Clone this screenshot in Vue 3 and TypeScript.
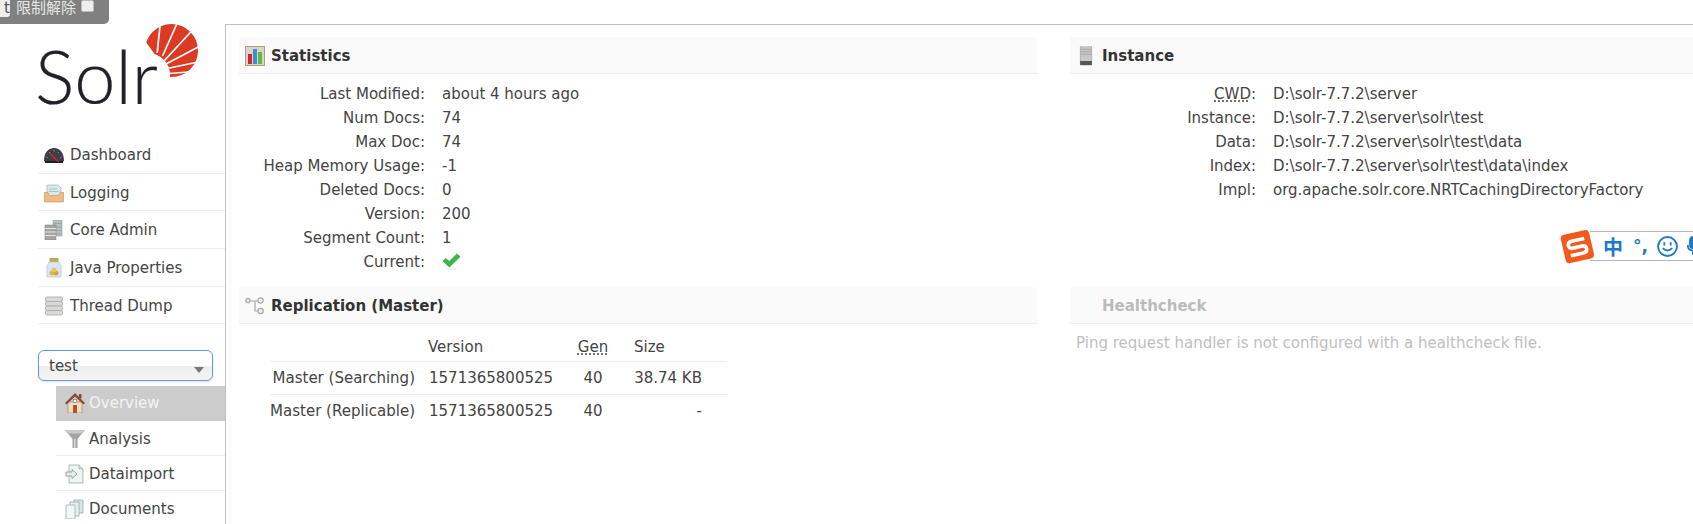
<script setup lang="ts">
const stats: [string, string][] = [
  ['Last Modified:', 'about 4 hours ago'],
  ['Num Docs:', '74'],
  ['Max Doc:', '74'],
  ['Heap Memory Usage:', '-1'],
  ['Deleted Docs:', '0'],
  ['Version:', '200'],
  ['Segment Count:', '1'],
]
const inst: [string, string][] = [
  ['Instance:', 'D:\\solr-7.7.2\\server\\solr\\test'],
  ['Data:', 'D:\\solr-7.7.2\\server\\solr\\test\\data'],
  ['Index:', 'D:\\solr-7.7.2\\server\\solr\\test\\data\\index'],
  ['Impl:', 'org.apache.solr.core.NRTCachingDirectoryFactory'],
]
const rays: [number, number, number, number][] = [
  [157.2, 53, 160.6, 20],
  [162.5, 56, 179, 19],
  [164.5, 60.5, 193, 29.5],
  [166, 64, 202, 45],
  [167, 68.5, 203, 61],
  [169, 73.5, 195, 71.5],
]
</script>

<template>
  <div class="page">
    <div class="banner">
      <span class="chip">t</span>
      <span class="banner-text">限制解除</span>
      <span class="check"></span>
    </div>

    <aside class="side">
      <div class="logo">
        <span class="logo-text">Solr</span>
        <svg class="sun" width="225" height="100" viewBox="0 0 225 100">
          <defs>
            <mask id="sunmask">
              <rect width="225" height="100" fill="#fff" />
              <circle cx="148" cy="75" r="22" fill="#000" />
              <polygon points="143,41.500 145.500,41.500 156,56 143,62" fill="#000" />
            </mask>
          </defs>
          <g mask="url(#sunmask)">
            <circle cx="171.500" cy="50.500" r="26.500" fill="#dc3a23" />
            <line v-for="(r, i) in rays" :key="i" :x1="r[0]" :y1="r[1]" :x2="r[2]" :y2="r[3]" stroke="#fff" stroke-width="1.700" />
          </g>
        </svg>
      </div>

      <ul class="nav">
        <li>
          <svg class="ico" viewBox="0 0 20 20"><path d="M0 16C0 8 4 3 10 3s10 5 10 13l-3 2H3z" fill="#3c3f44" /><path d="M1 16h18v2H1z" fill="#1e1f22" /><path d="M2.500 12L4 13M5 7l1 1M10 5v1.500M15 7l-1 1M17.500 12L16 13" stroke="#9a9da3" stroke-width=".8" /><path d="M6 8l8.500 9" stroke="#d8232a" stroke-width="1.300" /></svg>
          Dashboard
        </li>
        <li>
          <svg class="ico" viewBox="0 0 20 20"><path d="M3 2h11l3 3v9H3z" fill="#d6ebec" stroke="#9fb6b8" stroke-width=".7" /><path d="M5 6h8M5 8.500h10" stroke="#9fb6b8" stroke-width=".8" /><path d="M0 9.500h4l1 3h10l1-3h4v8a1.500 1.500 0 0 1-1.500 1.500h-17A1.500 1.500 0 0 1 0 17.500z" fill="#eebd85" stroke="#c98f50" stroke-width=".6" /></svg>
          Logging
        </li>
        <li>
          <svg class="ico" viewBox="0 0 20 20"><rect x="9" y="0" width="9" height="16" fill="#b9bdc4" stroke="#8d9199" stroke-width=".5" /><path d="M9 3.500h9M9 7h9M9 10.500h9M9 14h9" stroke="#84a98d" stroke-width=".8" /><path d="M1 5h11v15H1z" fill="#a5a7a5" stroke="#777" stroke-width=".5" /><path d="M1 8.500h11M1 12h11M1 15.500h11" stroke="#e3e3e3" /></svg>
          Core Admin
        </li>
        <li>
          <svg class="ico" viewBox="0 0 20 20"><rect x="5.500" y="0" width="9" height="4" fill="#c9a35a" /><path d="M5 4h10l2 4v11H3V8z" fill="#d9e8f2" stroke="#a9bfcf" stroke-width=".6" /><circle cx="8" cy="15" r="2.500" fill="#e3b34f" /><circle cx="12" cy="15" r="2.500" fill="#d9a23f" /><circle cx="10" cy="12" r="2.500" fill="#ecc36b" /></svg>
          Java Properties
        </li>
        <li>
          <svg class="ico" viewBox="0 0 20 20"><g fill="#d9d9d7" stroke="#a8a8a6" stroke-width=".8"><rect x="1.500" y="1" width="17" height="4.500" rx="1.500" /><rect x="1.500" y="5.500" width="17" height="4.500" rx="1.500" /><rect x="1.500" y="10" width="17" height="4.500" rx="1.500" /><rect x="1.500" y="14.500" width="17" height="4.500" rx="1.500" /></g></svg>
          Thread Dump
        </li>
      </ul>

      <div class="select">
        <span>test</span>
        <i class="arrow"></i>
      </div>

      <ul class="subnav">
        <li class="active">
          <svg class="ico" viewBox="0 0 20 20"><path d="M3 9h14v11H3z" fill="#f1dcc0" stroke="#a07c58" stroke-width=".6" /><path d="M0 10L10 0l10 10-1.500 1.500L10 3.500 1.500 11.500z" fill="#8a4a36" /><rect x="14" y="1" width="2.500" height="4.500" fill="#8a4a36" /><rect x="8" y="12" width="4" height="8" fill="#b3552a" /><rect x="8.500" y="6.500" width="3" height="3" fill="#fff" stroke="#8a4a36" stroke-width=".5" /></svg>
          Overview
        </li>
        <li>
          <svg class="ico" viewBox="0 0 20 20"><path d="M0 1h20l-7.500 9v9h-5v-9z" fill="#a3a5a3" /><path d="M0 1h20l-3 3.500H3z" fill="#c9cac9" /><path d="M9 10h1.500v9H9z" fill="#d6d6d6" /></svg>
          Analysis
        </li>
        <li>
          <svg class="ico" viewBox="0 0 20 20"><path d="M4 1h10l4 4v14H4z" fill="#eef4f2" stroke="#9aaba8" stroke-width=".8" /><path d="M14 1v4h4" fill="#cfdcd9" stroke="#9aaba8" stroke-width=".6" /><path d="M1 8h6V5.500l5 4.500-5 4.500V12H1z" fill="#e6efec" stroke="#87a09c" stroke-width=".9" /></svg>
          Dataimport
        </li>
        <li>
          <svg class="ico" viewBox="0 0 20 20"><path d="M9 1h9v13H9z" fill="#d9e4e4" stroke="#8fa3a3" stroke-width=".7" /><path d="M5 3h9v14H5z" fill="#e6eeee" stroke="#8fa3a3" stroke-width=".7" /><path d="M1 6h9v14H1z" fill="#f2f6f6" stroke="#8fa3a3" stroke-width=".7" /></svg>
          Documents
        </li>
      </ul>
    </aside>

    <main class="main">
      <section class="block">
        <h2>
          <svg class="h-ico" viewBox="0 0 20 20"><rect x=".5" y=".5" width="19" height="19" fill="#dcd4c4" stroke="#a89f8c" /><rect x="3" y="8" width="4" height="10" fill="#d8232a" /><rect x="8" y="3" width="4" height="15" fill="#3a8fd8" /><rect x="13" y="6" width="4" height="12" fill="#5cb848" /></svg>
          Statistics
        </h2>
        <dl class="rows">
          <div v-for="s in stats" :key="s[0]" class="row">
            <dt>{{ s[0] }}</dt>
            <dd>{{ s[1] }}</dd>
          </div>
          <div class="row">
            <dt>Current:</dt>
            <dd>
              <svg class="tick" width="19" height="17" viewBox="0 0 19 17"><path d="M3 16h11" stroke="#e2e2e2" /><path d="M0.500 8l3.200-3 3.500 3L15 .5l3.500 3.200L7.300 14.500z" fill="#3fb44a" /></svg>
            </dd>
          </div>
        </dl>
      </section>

      <section class="block">
        <h2>
          <svg class="h-ico" viewBox="0 0 20 24"><rect x="3" y="1" width="14" height="21" fill="#c9c9c9" stroke="#8e8e8e" stroke-width=".6" /><path d="M4 4h12M4 7h12M4 10h12" stroke="#a0a0a0" /><rect x="3" y="18" width="14" height="5" fill="#555" /></svg>
          Instance
        </h2>
        <dl class="rows">
          <div class="row">
            <dt><abbr>CWD</abbr>:</dt>
            <dd>D:\solr-7.7.2\server</dd>
          </div>
          <div v-for="s in inst" :key="s[0]" class="row">
            <dt>{{ s[0] }}</dt>
            <dd>{{ s[1] }}</dd>
          </div>
        </dl>
      </section>

      <section class="block">
        <h2>
          <svg class="h-ico" viewBox="0 0 20 20"><g fill="#eee" stroke="#a8a8a8" stroke-width="1.200"><path d="M4 5h9M10 5v10h4" fill="none" /><circle cx="3" cy="4.500" r="2.200" /><circle cx="15.500" cy="4.500" r="2.700" /><circle cx="15.500" cy="15" r="2.700" /></g></svg>
          Replication (Master)
        </h2>
        <table class="rep">
          <thead>
            <tr>
              <th></th>
              <th>Version</th>
              <th class="gen"><abbr>Gen</abbr></th>
              <th>Size</th>
            </tr>
          </thead>
          <tbody>
            <tr>
              <td class="name">Master (Searching)</td>
              <td>1571365800525</td>
              <td class="gen">40</td>
              <td class="size">38.74 KB</td>
            </tr>
            <tr>
              <td class="name">Master (Replicable)</td>
              <td>1571365800525</td>
              <td class="gen">40</td>
              <td class="size">-</td>
            </tr>
          </tbody>
        </table>
      </section>

      <section class="block">
        <h2 class="off">Healthcheck</h2>
        <p class="ping">Ping request handler is not configured with a healthcheck file.</p>
      </section>
    </main>

    <div class="ime">
      <svg class="ime-s" width="36" height="36" viewBox="0 0 36 36">
        <rect x="3" y="3" width="29" height="29" rx="4" fill="#f2591a" transform="rotate(-13 18 18)" />
        <path d="M26 11H13q-4 0-4 3.500t4 3.500h9q4 0 4 3.500T22 25H9" fill="none" stroke="#fff" stroke-width="3.600" transform="rotate(-13 18 18)" />
      </svg>
      <span class="ime-zh">中</span>
      <span class="ime-p">°,</span>
      <svg class="ime-face" width="21" height="21" viewBox="0 0 20 20" fill="none" stroke="#1f78c8" stroke-width="1.800"><circle cx="10" cy="10" r="9" /><path d="M5.500 11.500q4.500 4.500 9 0" /><path d="M7 6v3M13 6v3" /></svg>
      <svg class="ime-mic" width="12" height="20" viewBox="0 0 12 20" fill="none" stroke="#1f78c8" stroke-width="1.800"><rect x="3" y="1" width="6" height="11" rx="3" fill="#1f78c8" /><path d="M0.800 9q0 5.500 5.200 5.500T11.200 9M6 14.500V19" /></svg>
    </div>
  </div>
</template>

<style>
html, body { margin: 0; overflow: hidden; background: #fff; }
</style>

<style scoped>
.page {
  position: relative;
  display: flex;
  width: 1693px;
  height: 524px;
  overflow: hidden;
  font-family: "DejaVu Sans", sans-serif;
  font-size: 15px;
  color: #444;
}
.banner {
  position: absolute;
  left: 0;
  top: 0;
  width: 109px;
  height: 24px;
  background: #808080;
  border-radius: 0 0 5px 0;
  display: flex;
  align-items: flex-start;
  color: #e6e6e6;
  line-height: 16px;
  z-index: 2;
}
.chip {
  width: 10px;
  height: 17px;
  background: #eee;
  color: #555;
  border-radius: 0 0 3px 0;
  text-align: right;
  overflow: hidden;
}
.banner-text {
  margin-left: 6px;
  font-family: "Noto Sans CJK SC", sans-serif;
  font-size: 15px;
  line-height: 14px;
}
.check {
  width: 13px;
  height: 12px;
  margin-left: 5px;
  background: #eee;
  border: 1px solid #bbb;
  box-sizing: border-box;
  border-radius: 2px;
}
.side {
  width: 225px;
  flex: none;
}
.logo {
  position: relative;
  height: 128px;
}
.logo-text {
  position: absolute;
  left: 35px;
  top: 31px;
  font-family: Lato, sans-serif;
  font-weight: 300;
  font-size: 74px;
  line-height: 90px;
  letter-spacing: 0;
  color: #22202b;
  -webkit-text-stroke: 0.2px #22202b;
}
.sun {
  position: absolute;
  left: 0;
  top: 0;
}
ul {
  list-style: none;
  margin: 0;
  padding: 0;
}
.nav {
  margin-left: 38px;
  margin-top: 8px;
}
.nav li {
  height: 35.7px;
  padding: 1px 0 0 6px;
  border-bottom: 1px solid #eee;
  display: flex;
  align-items: center;
  gap: 6px;
}
.ico {
  width: 20px;
  height: 20px;
  flex: none;
}
.select {
  margin: 26px 0 0 38px;
  width: 175px;
  height: 31px;
  box-sizing: border-box;
  border: 1px solid #5c9bf2;
  border-radius: 6px;
  background: linear-gradient(#fff 50%, #eee 50%, #f4f4f4);
  padding-left: 10px;
  line-height: 30px;
  position: relative;
  box-shadow: 0 1px 2px rgba(0, 0, 0, 0.12);
}
.arrow {
  position: absolute;
  right: 8px;
  top: 16px;
  border: 5px solid transparent;
  border-top: 6px solid #777;
  border-bottom: 0;
}
.subnav {
  margin: 5px 0 0 56px;
}
.subnav li {
  height: 33px;
  padding: 1px 0 0 9px;
  border-bottom: 1px solid #eee;
  display: flex;
  align-items: center;
  gap: 4px;
}
.subnav li.active {
  height: 33px;
  padding: 0 0 1px 9px;
  background: #ccc;
  color: #f4f4f4;
  border-bottom-color: #ccc;
}
.main {
  margin-top: 24px;
  border-top: 1px solid #c0c0c0;
  border-left: 1px solid #c0c0c0;
  padding: 12px 0 0 13px;
  flex: 1;
  display: grid;
  grid-template-columns: 798px 798px;
  grid-template-rows: 250px auto;
  column-gap: 33px;
  align-content: start;
}
h2 {
  margin: 0;
  height: 35px;
  padding: 1px 0 0 6px;
  background: #fafafa;
  border-bottom: 1px solid #eee;
  display: flex;
  align-items: center;
  gap: 6px;
  font-size: 15px;
  font-weight: bold;
  color: #333;
}
h2.off {
  color: #bbb;
  padding-left: 32px;
}
.h-ico {
  width: 20px;
  height: 20px;
  flex: none;
}
.rows {
  margin: 8px 0 0;
}
.row {
  display: flex;
  height: 24px;
  line-height: 24px;
}
dt {
  text-align: right;
  flex: none;
  width: 186px;
  margin-right: 17px;
}
dd {
  margin: 0;
}
.tick {
  display: block;
  margin-top: 3px;
}
abbr {
  text-decoration: underline dotted;
  text-underline-offset: 2px;
}
.rep {
  border-collapse: collapse;
  margin: 9px 0 0 31px;
  width: 457px;
  table-layout: fixed;
}
.rep th {
  font-weight: normal;
  text-align: left;
  height: 28px;
  padding: 0 0 0 10px;
  border-bottom: 1px solid #eee;
}
.rep th:first-child { width: 138px; }
.rep th:nth-child(2) { width: 140px; }
.rep th:nth-child(3) { width: 50px; }
.rep th:nth-child(4) { padding-left: 16px; }
.rep td {
  height: 32px;
  padding: 0 0 0 11px;
  border-bottom: 1px solid #eee;
  white-space: nowrap;
}
.rep tr:last-child td { border-bottom: 0; }
.rep td.name {
  text-align: right;
  padding: 0 3px 0 0;
}
.rep .gen {
  text-align: center;
  padding: 0;
}
.rep td.size {
  text-align: right;
  padding-right: 25px;
}
.ping {
  margin: 7px 0 0 6px;
  color: #c0c0c0;
  line-height: 24px;
}
.ime {
  position: absolute;
  left: 1590px;
  top: 231px;
  width: 103px;
  height: 30px;
  box-sizing: border-box;
  border-top: 1px solid #b3b7c9;
  border-bottom: 1px solid #b3b7c9;
  display: flex;
  align-items: center;
  padding-left: 13px;
  background: #fff;
  color: #1f78c8;
  z-index: 2;
}
.ime-s {
  position: absolute;
  left: -30px;
  top: -3px;
}
.ime-zh {
  font-family: "Noto Sans CJK SC", sans-serif;
  font-weight: bold;
  font-size: 20px;
  width: 30px;
  flex: none;
}
.ime-p {
  font-weight: bold;
  font-size: 17px;
  width: 24px;
  flex: none;
}
.ime-face {
  flex: none;
}
.ime-mic {
  margin-left: 9px;
  flex: none;
}
</style>
